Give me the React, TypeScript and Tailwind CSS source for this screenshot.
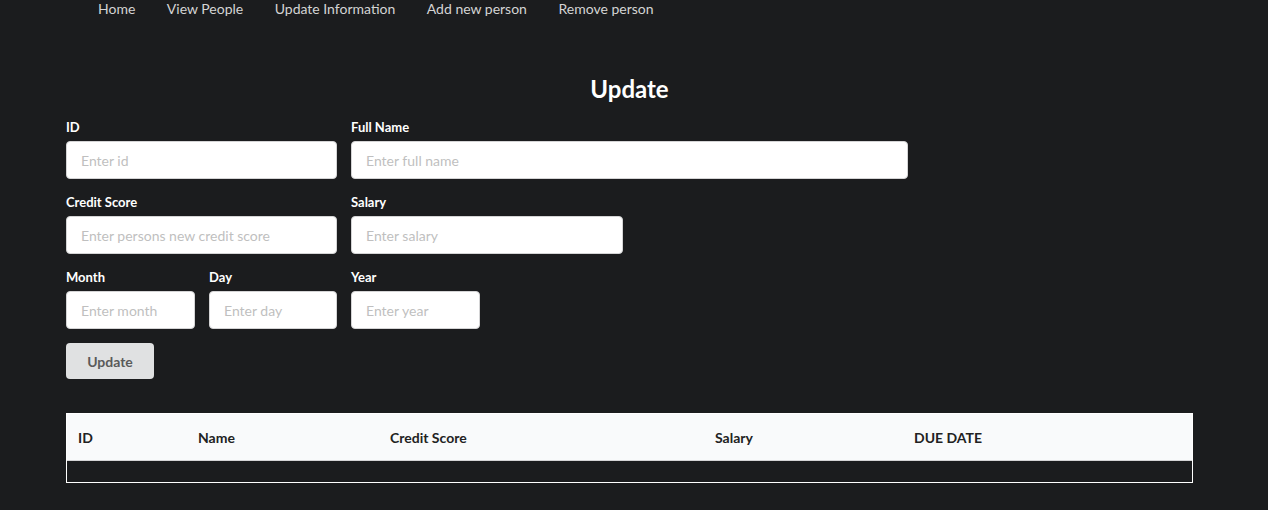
import React from 'react'

const NAV = ['Home', 'View People', 'Update Information', 'Add new person', 'Remove person']

function Field({ label, placeholder, width }: { label: string; placeholder: string; width: string }) {
  return (
    <div className={`flex flex-col ${width}`}>
      <label className="mb-[5px] text-[13px] font-bold leading-[17px] text-white">{label}</label>
      <input
        placeholder={placeholder}
        className="h-[38px] w-full rounded-[4px] border border-[#d4d4d5] bg-white px-[14px] text-[14px] text-[#333] outline-none placeholder:text-[#bfbfbf]"
      />
    </div>
  )
}

export default function App() {
  return (
    <div className="min-h-[510px] bg-[#1b1c1e] font-['Lato','Noto_Sans',sans-serif]">
      {/* Top menu */}
      <div className="flex h-[17px] items-center gap-[31.5px] pl-[98px] text-[14px] text-[#d4d4d4]">
        {NAV.map((n) => (
          <span key={n}>{n}</span>
        ))}
      </div>

      <h1 className="mt-[57px] pr-[9px] text-center text-[24px] font-bold leading-[29px] text-white">Update</h1>

      <div className="mt-[16px] px-[66px]">
        <div className="flex flex-col gap-[15px]">
          <div className="flex gap-[14px]">
            <Field label="ID" placeholder="Enter id" width="w-[271px]" />
            <Field label="Full Name" placeholder="Enter full name" width="w-[557px]" />
          </div>
          <div className="flex gap-[14px]">
            <Field label="Credit Score" placeholder="Enter persons new credit score" width="w-[271px]" />
            <Field label="Salary" placeholder="Enter salary" width="w-[272px]" />
          </div>
          <div className="flex gap-[14px]">
            <Field label="Month" placeholder="Enter month" width="w-[129px]" />
            <Field label="Day" placeholder="Enter day" width="w-[128px]" />
            <Field label="Year" placeholder="Enter year" width="w-[129px]" />
          </div>
        </div>

        <button className="mt-[14px] h-[36px] w-[88px] rounded-[4px] bg-[#e0e1e2] text-[14px] font-bold text-[#5a5a5a]">
          Update
        </button>

        {/* Results table */}
        <div className="mt-[34px] w-[1127px] border border-white">
          <div className="flex h-[46px] items-center bg-[#f9fafb] text-[14px] font-bold text-[#222]">
            <div className="w-[120px] pl-[11px]">ID</div>
            <div className="w-[192px] pl-[11px]">Name</div>
            <div className="w-[325px] pl-[11px]">Credit Score</div>
            <div className="w-[199px] pl-[11px]">Salary</div>
            <div className="flex-1 pl-[11px]">DUE DATE</div>
          </div>
          <div className="h-[22px] border-t border-[#d4d4d5] bg-[#1b1c1e]" />
        </div>
      </div>
    </div>
  )
}
